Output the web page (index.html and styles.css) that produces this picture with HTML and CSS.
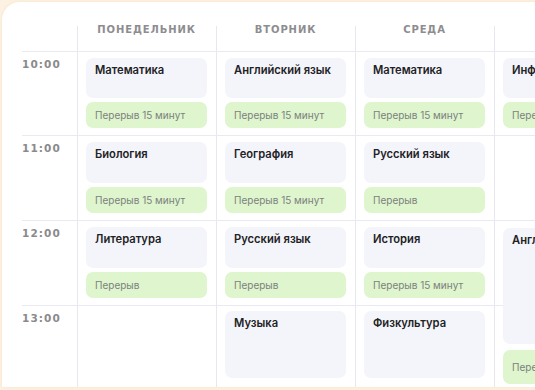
FILE: index.html
```html
<!DOCTYPE html>
<html lang="ru">
<head>
<meta charset="utf-8">
<link rel="stylesheet" href="styles.css">
</head>
<body>
<div class="card">
  <div class="grid">
    <div class="vline c2"></div>
    <div class="vline c3"></div>
    <div class="vline c4"></div>
    <div class="vline c5"></div>
    <div class="hline r2"></div>
    <div class="hline r3"></div>
    <div class="hline r4"></div>
    <div class="hline r5"></div>

    <div class="head c2">Понедельник</div>
    <div class="head c3">Вторник</div>
    <div class="head c4">Среда</div>

    <div class="time r2">10:00</div>
    <div class="time r3">11:00</div>
    <div class="time r4">12:00</div>
    <div class="time r5">13:00</div>

    <div class="cell c2 r2"><div class="lesson">Математика</div><div class="pause">Перерыв 15 минут</div></div>
    <div class="cell c3 r2"><div class="lesson">Английский язык</div><div class="pause">Перерыв 15 минут</div></div>
    <div class="cell c4 r2"><div class="lesson">Математика</div><div class="pause">Перерыв 15 минут</div></div>
    <div class="cell c5 r2"><div class="lesson">Информатика</div><div class="pause">Перерыв 15 минут</div></div>

    <div class="cell c2 r3"><div class="lesson">Биология</div><div class="pause">Перерыв 15 минут</div></div>
    <div class="cell c3 r3"><div class="lesson">География</div><div class="pause">Перерыв 15 минут</div></div>
    <div class="cell c4 r3"><div class="lesson">Русский язык</div><div class="pause">Перерыв</div></div>

    <div class="cell c2 r4"><div class="lesson">Литература</div><div class="pause">Перерыв</div></div>
    <div class="cell c3 r4"><div class="lesson">Русский язык</div><div class="pause">Перерыв</div></div>
    <div class="cell c4 r4"><div class="lesson">История</div><div class="pause">Перерыв 15 минут</div></div>
    <div class="cell c5 r4 span2"><div class="lesson">Английский язык</div><div class="pause">Перерыв 15 минут</div></div>

    <div class="cell c3 r5 last"><div class="lesson">Музыка</div></div>
    <div class="cell c4 r5 last"><div class="lesson">Физкультура</div></div>
  </div>
</div>
</body>
</html>
```

FILE: styles.css
```css
html, body {
  margin: 0;
  padding: 0;
  width: 535px;
  height: 390px;
  overflow: hidden;
  background: #fdf1e2;
}

.card {
  margin: 2px 0 0 2px;
  height: 385px;
  width: 700px;
  background: #ffffff;
  border-top-left-radius: 18px;
  box-shadow: 0 0 3px rgba(240, 200, 150, 0.35);
  padding: 24px 0 0 20px;
  box-sizing: border-box;
  overflow: hidden;
}

.grid {
  display: grid;
  grid-template-columns: 55px 139px 139px 139px 139px;
  grid-template-rows: 25px 84px 85px 85px 82px;
}

.c2 { grid-column: 2; }
.c3 { grid-column: 3; }
.c4 { grid-column: 4; }
.c5 { grid-column: 5; }
.r2 { grid-row: 2; }
.r3 { grid-row: 3; }
.r4 { grid-row: 4; }
.r5 { grid-row: 5; }

.vline {
  grid-row: 1 / -1;
  border-left: 1px solid #e7e7ef;
}

.hline {
  grid-column: 1 / -1;
  border-top: 1px solid #e9e9f1;
}

.head {
  grid-row: 1;
  text-align: center;
  font-family: "DejaVu Sans", sans-serif;
  font-weight: bold;
  font-size: 10px;
  line-height: 8px;
  letter-spacing: 0.9px;
  text-transform: uppercase;
  color: #8d8d8f;
}

.time {
  grid-column: 1;
  font-family: "DejaVu Sans", sans-serif;
  font-weight: bold;
  font-size: 10.5px;
  line-height: 12px;
  letter-spacing: 1.1px;
  color: #8a8a8c;
  padding-top: 7px;
}

.cell {
  display: flex;
  flex-direction: column;
  gap: 4px;
  padding: 7px 9px 7px 9px;
  min-height: 0;
}

.cell.span2 {
  grid-row: 4 / 6;
  padding: 8px 9px 3px 9px;
  gap: 6px;
}

.cell.span2 .pause {
  height: 34px;
}

.cell.last {
  padding: 6px 9px 9px 9px;
}

.lesson {
  flex: 1;
  background: #f4f5fa;
  border-radius: 7px;
  padding: 5px 9px;
  font-family: "Inter", sans-serif;
  font-weight: 600;
  font-size: 11.2px;
  line-height: 15px;
  color: #222225;
}

.pause {
  flex: none;
  height: 26px;
  background: #def5cd;
  border-radius: 7px;
  padding: 0 9px;
  display: flex;
  align-items: center;
  font-family: "Inter", sans-serif;
  font-size: 10px;
  color: #7c817e;
}
```
